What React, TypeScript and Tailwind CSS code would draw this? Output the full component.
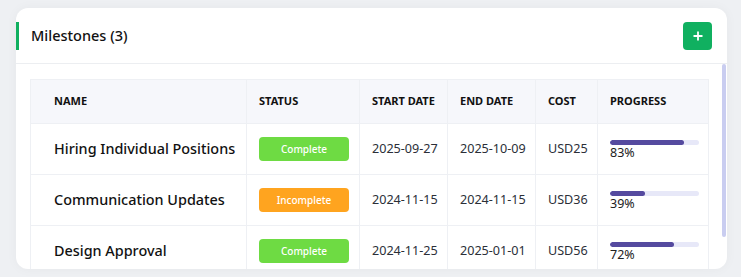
import React from 'react';

interface Milestone {
  name: string;
  status: 'Complete' | 'Incomplete';
  start: string;
  end: string;
  cost: string;
  progress: number;
}

const milestones: Milestone[] = [
  { name: 'Hiring Individual Positions', status: 'Complete', start: '2025-09-27', end: '2025-10-09', cost: 'USD25', progress: 83 },
  { name: 'Communication Updates', status: 'Incomplete', start: '2024-11-15', end: '2024-11-15', cost: 'USD36', progress: 39 },
  { name: 'Design Approval', status: 'Complete', start: '2024-11-25', end: '2025-01-01', cost: 'USD56', progress: 72 },
];

const StatusBadge: React.FC<{ status: Milestone['status'] }> = ({ status }) => (
  <span
    className={`flex h-6 w-[90px] items-center justify-center rounded text-[10px] font-medium text-white
      ${status === 'Complete' ? 'bg-[#6edb43]' : 'bg-[#ffa41f]'}`}
  >
    {status}
  </span>
);

const ProgressCell: React.FC<{ value: number }> = ({ value }) => (
  <div className="w-[89px] pt-[2px]">
    <div className="h-[5px] w-full overflow-hidden rounded-full bg-[#e7e8f8]">
      <div className="h-full rounded-full bg-[#554a9f]" style={{ width: `${value}%` }} />
    </div>
    <p className="text-[12.5px] leading-[16px] text-[#222]">{value}%</p>
  </div>
);

export default function App() {
  const th = 'border border-[#eef0f4] px-3 text-left text-[11px] font-bold uppercase whitespace-nowrap text-[#111]';
  const td = 'border border-[#eef0f4] px-3 text-[12.6px] whitespace-nowrap text-[#2b2f38]';

  return (
    <div
      className="h-[277px] w-[741px] overflow-hidden bg-[#eef0f3] pl-4 pt-2 pr-[14px]"
      style={{ fontFamily: '"Noto Sans", "Open Sans", sans-serif' }}
    >
      <div className="h-[261px] overflow-hidden rounded-xl bg-white shadow-[0_0_12px_rgba(0,0,0,0.04)]">
        <div className="flex h-14 items-center justify-between border-b border-[#eceef1] pr-[15px]">
          <div className="flex h-7 items-center border-l-[3px] border-[#10b060] pl-3">
            <h2 className="text-[14.5px] font-medium text-[#111]">Milestones (3)</h2>
          </div>
          <button className="flex h-7 w-[29px] items-center justify-center rounded bg-[#10b060] text-white">
            <svg width="10" height="10" viewBox="0 0 10 10" fill="none" stroke="currentColor" strokeWidth="1.8">
              <path d="M5 0.5v9M0.5 5h9" />
            </svg>
          </button>
        </div>

        <div className="flex h-[205px] justify-between">
          <div className="pl-[14px] pt-[15px]">
            <table className="w-[678px] table-fixed border-collapse">
              <colgroup>
                <col className="w-[216px]" />
                <col className="w-[113px]" />
                <col className="w-[88px]" />
                <col className="w-[88px]" />
                <col className="w-[62px]" />
                <col className="w-[111px]" />
              </colgroup>
              <thead>
                <tr className="h-[44px] bg-[#f6f7fb]">
                  <th className={`${th} pl-[23px]`}>Name</th>
                  <th className={th}>Status</th>
                  <th className={th}>Start Date</th>
                  <th className={th}>End Date</th>
                  <th className={th}>Cost</th>
                  <th className={th}>Progress</th>
                </tr>
              </thead>
              <tbody>
                {milestones.map((m) => (
                  <tr key={m.name} className="h-[51px]">
                    <td className="border border-[#eef0f4] pl-[23px] text-[14.4px] font-medium whitespace-nowrap text-[#111]">{m.name}</td>
                    <td className={td}><StatusBadge status={m.status} /></td>
                    <td className={td}>{m.start}</td>
                    <td className={td}>{m.end}</td>
                    <td className={td}>{m.cost}</td>
                    <td className={td}><ProgressCell value={m.progress} /></td>
                  </tr>
                ))}
              </tbody>
            </table>
          </div>
          <div className="mr-[1px] h-[173px] w-1 rounded-full bg-[#c9cdf0]" />
        </div>
      </div>
    </div>
  );
}
